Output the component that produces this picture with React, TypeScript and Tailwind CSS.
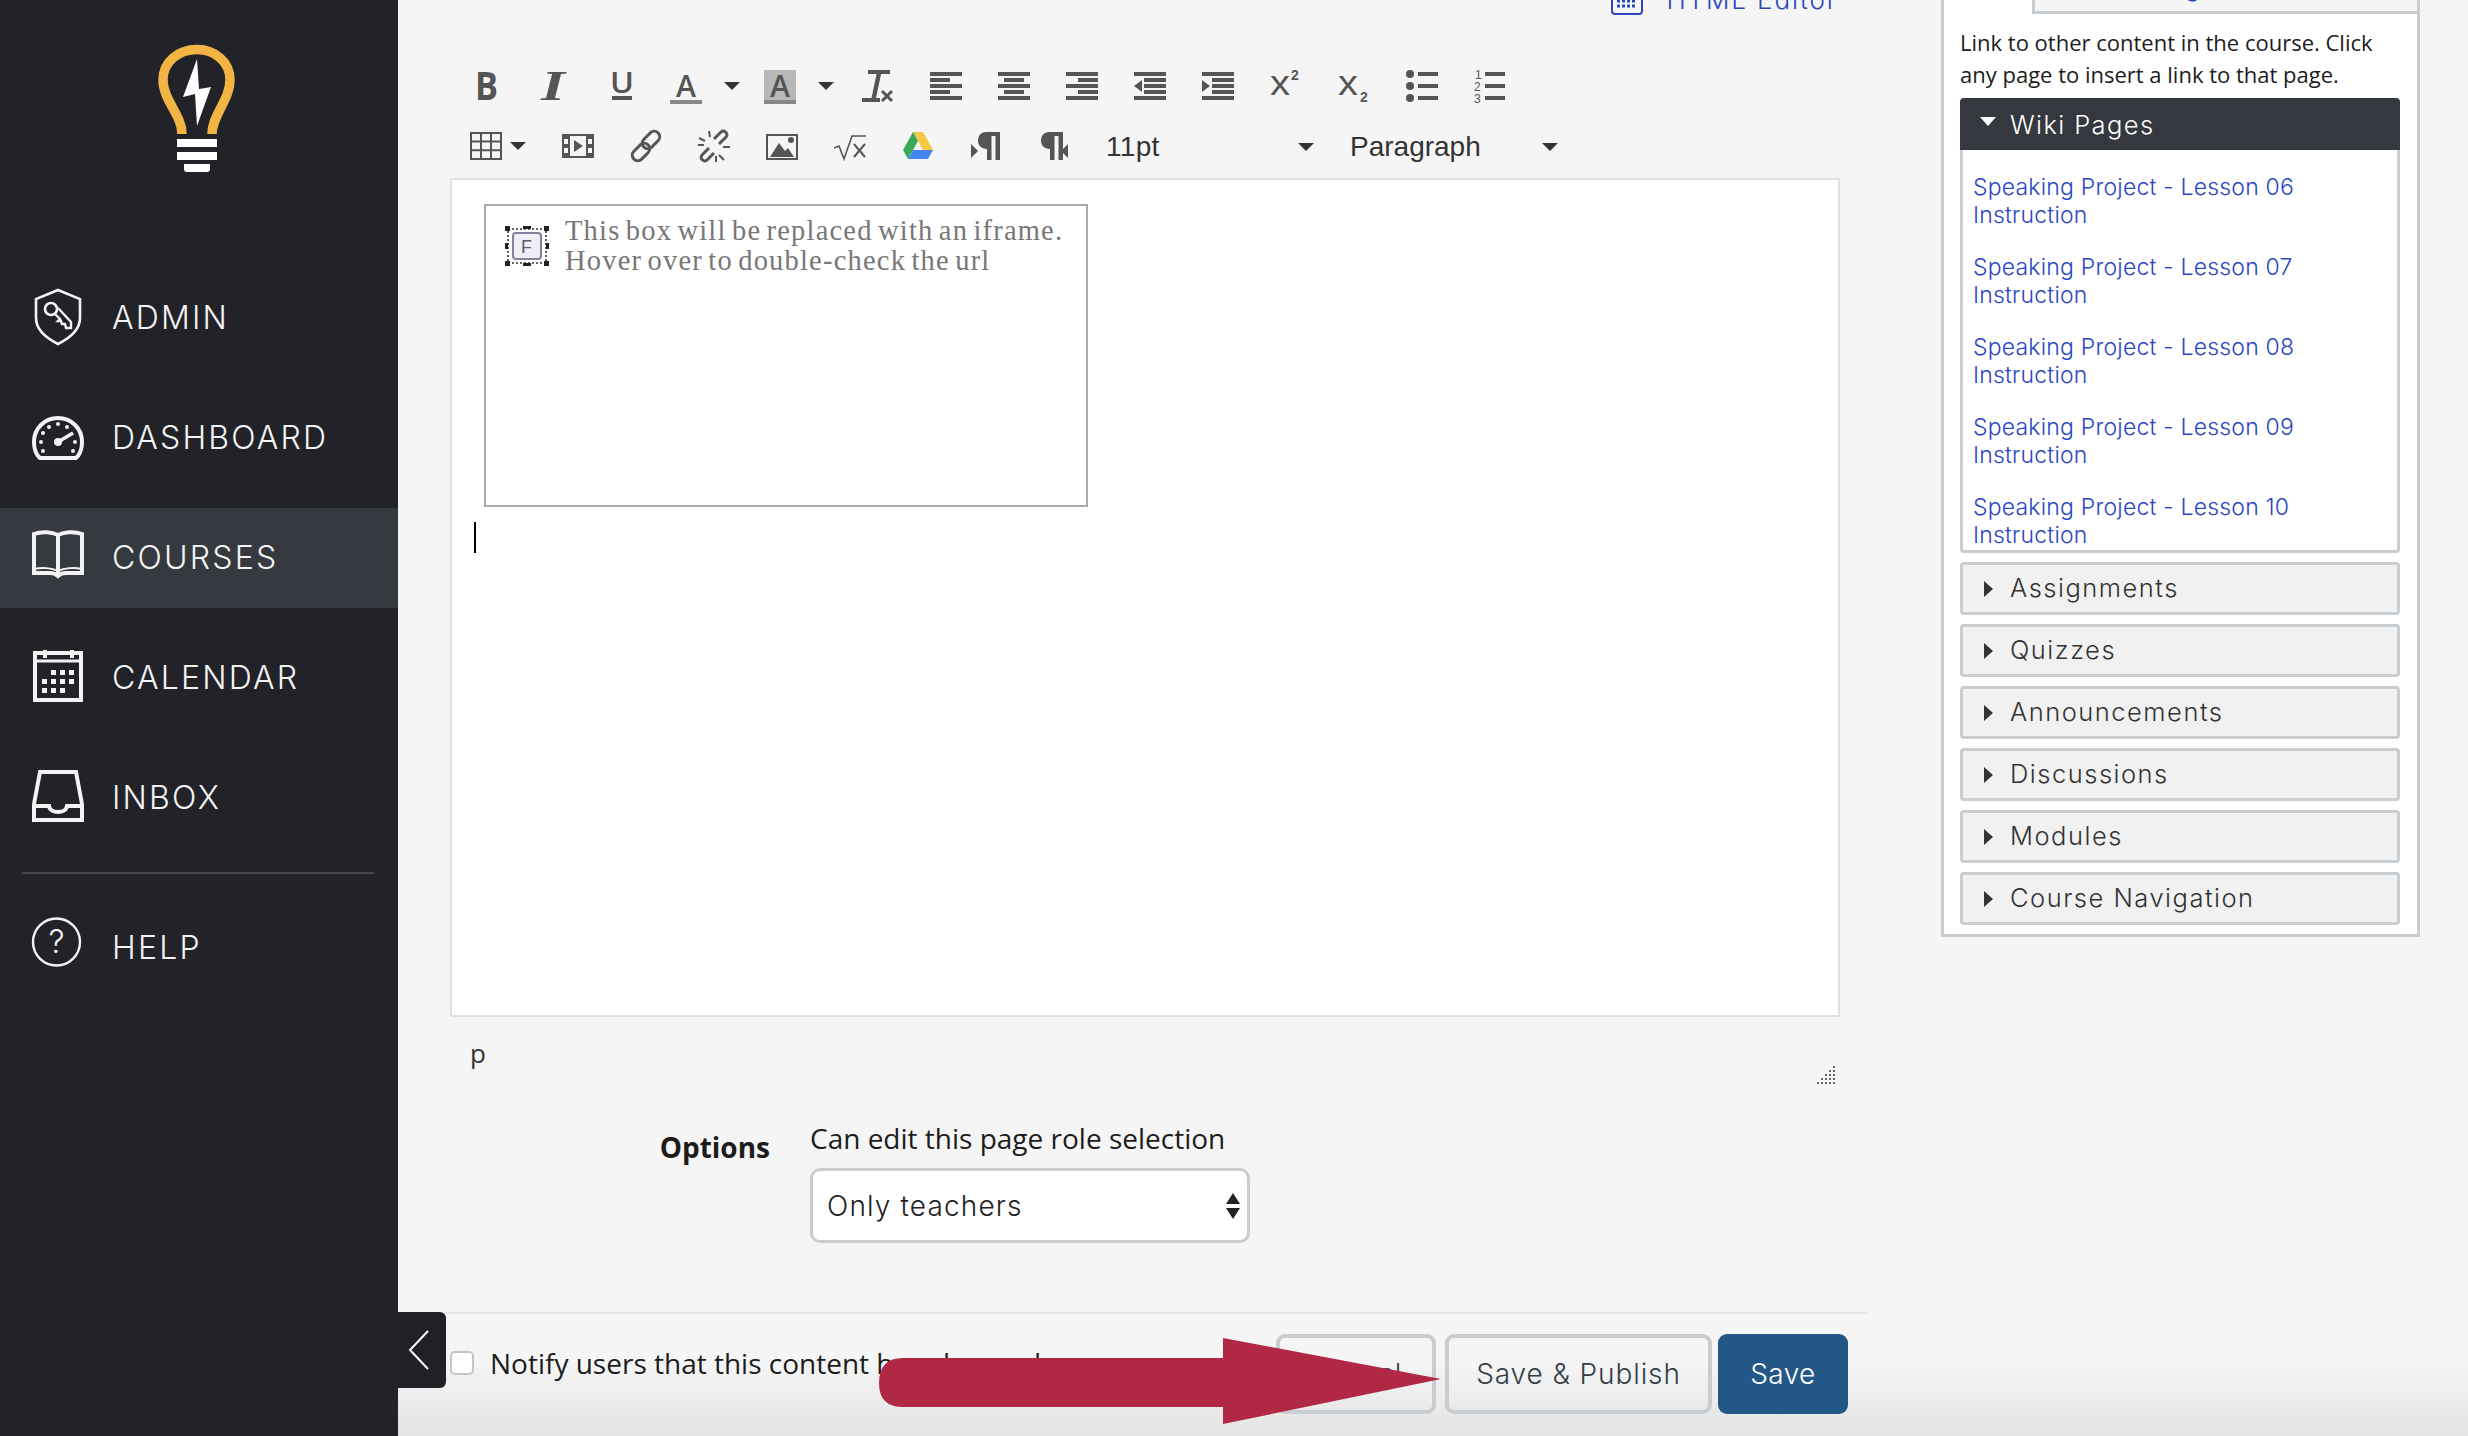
import React from "react";

const G = "#555555";

function Align({ kind }: { kind: "l" | "c" | "r" }) {
  const sx = kind === "l" ? 0 : kind === "c" ? 6 : 12;
  return (
    <svg width="32" height="36" viewBox="0 0 32 36" className="shrink-0">
      <rect x="0" y="4" width="32" height="4" fill={G} />
      <rect x={sx} y="10" width="20" height="4" fill={G} />
      <rect x="0" y="16" width="32" height="4" fill={G} />
      <rect x={sx} y="22" width="20" height="4" fill={G} />
      <rect x="0" y="28" width="32" height="4" fill={G} />
    </svg>
  );
}

function Indent({ dir }: { dir: "left" | "right" }) {
  return (
    <svg width="32" height="36" viewBox="0 0 32 36" className="shrink-0">
      <rect x="0" y="4" width="32" height="4" fill={G} />
      <rect x="10" y="10" width="22" height="4" fill={G} />
      <rect x="10" y="16" width="22" height="4" fill={G} />
      <rect x="10" y="22" width="22" height="4" fill={G} />
      <rect x="0" y="28" width="32" height="4" fill={G} />
      {dir === "left" ? <path d="M0 18 L8 12 L8 24 Z" fill={G} /> : <path d="M8 18 L0 12 L0 24 Z" fill={G} />}
    </svg>
  );
}

function Caret({ className = "" }: { className?: string }) {
  return (
    <svg width="16" height="36" viewBox="0 0 16 36" className={"shrink-0 " + className}>
      <path d="M0 14 L16 14 L8 22 Z" fill="#333" />
    </svg>
  );
}

function TextIcon({ children, w = 32 }: { children: React.ReactNode; w?: number }) {
  return (
    <svg width={w} height="36" viewBox={`0 0 ${w} 36`} className="shrink-0 overflow-visible">
      {children}
    </svg>
  );
}

const OS = "'Open Sans', sans-serif";
const LS = "'Liberation Sans', sans-serif";

function Pilcrow({ dir }: { dir: "l" | "r" }) {
  const ox = dir === "l" ? 5 : 0;
  return (
    <TextIcon>
      <g transform={`translate(${ox} 0)`}>
        <path d="M11 3 L25 3 L25 31 L20.5 31 L20.5 7 L16.5 7 L16.5 31 L12 31 L12 20 C6 20 3 16 3 11.5 C3 7 6 3 11 3 Z" fill={G} />
      </g>
      {dir === "l" ? <path d="M1 15 L8 22 L1 29 Z" fill={G} /> : <path d="M30 15 L23 22 L30 29 Z" fill={G} />}
    </TextIcon>
  );
}

function ToolbarRow1() {
  return (
    <div className="mt-[52px] flex h-[36px] items-start pl-[20px]">
      <TextIcon>
        <text x="5" y="32" fontFamily={OS} fontWeight="700" fontSize="39" fill={G} textLength="23" lengthAdjust="spacingAndGlyphs">B</text>
      </TextIcon>
      <div className="ml-[36px]">
        <TextIcon>
          <text x="3" y="32" fontFamily="'Liberation Serif', serif" fontStyle="italic" fontWeight="700" fontSize="42" fill={G} textLength="24" lengthAdjust="spacingAndGlyphs">I</text>
        </TextIcon>
      </div>
      <div className="ml-[36px]">
        <TextIcon>
          <text x="4" y="25" fontFamily={OS} fontWeight="600" fontSize="29" fill={G} textLength="24" lengthAdjust="spacingAndGlyphs">U</text>
          <rect x="6" y="28" width="20" height="4" fill={G} />
        </TextIcon>
      </div>
      <div className="ml-[32px]">
        <TextIcon>
          <text x="6" y="29" fontFamily={OS} fontWeight="600" fontSize="31" fill={G} textLength="20" lengthAdjust="spacingAndGlyphs">A</text>
          <rect x="0" y="32" width="32" height="4" fill="#888" />
        </TextIcon>
      </div>
      <Caret className="ml-[22px]" />
      <div className="ml-[24px]">
        <TextIcon>
          <rect x="0" y="2" width="32" height="34" fill="#b8b8b8" />
          <rect x="0" y="32" width="32" height="4" fill="#888" />
          <text x="6" y="29" fontFamily={OS} fontWeight="600" fontSize="31" fill={G} textLength="20" lengthAdjust="spacingAndGlyphs">A</text>
        </TextIcon>
      </div>
      <Caret className="ml-[22px]" />
      <div className="ml-[28px]">
        <TextIcon>
          <rect x="6" y="2" width="22" height="4" fill={G} />
          <path d="M15 4 L19.5 4 L14 30 L9.5 30 Z" fill={G} />
          <rect x="0" y="30" width="18" height="4" fill={G} />
          <path d="M20 23 L30 33 M30 23 L20 33" stroke={G} strokeWidth="3" />
        </TextIcon>
      </div>
      <div className="ml-[36px]"><Align kind="l" /></div>
      <div className="ml-[36px]"><Align kind="c" /></div>
      <div className="ml-[36px]"><Align kind="r" /></div>
      <div className="ml-[36px]"><Indent dir="left" /></div>
      <div className="ml-[36px]"><Indent dir="right" /></div>
      <div className="ml-[36px]">
        <TextIcon>
          <text x="0" y="27" fontFamily={LS} fontSize="35" fill={G} textLength="20" lengthAdjust="spacingAndGlyphs">x</text>
          <text x="21" y="12" fontFamily={LS} fontSize="14" fontWeight="700" fill={G}>2</text>
        </TextIcon>
      </div>
      <div className="ml-[36px]">
        <TextIcon>
          <text x="0" y="27" fontFamily={LS} fontSize="35" fill={G} textLength="20" lengthAdjust="spacingAndGlyphs">x</text>
          <text x="22" y="34" fontFamily={LS} fontSize="14" fontWeight="700" fill={G}>2</text>
        </TextIcon>
      </div>
      <div className="ml-[36px]">
        <TextIcon>
          <circle cx="4" cy="6" r="4" fill={G} />
          <circle cx="4" cy="18" r="4" fill={G} />
          <circle cx="4" cy="30" r="4" fill={G} />
          <rect x="12" y="4" width="20" height="4" fill={G} />
          <rect x="12" y="16" width="20" height="4" fill={G} />
          <rect x="12" y="28" width="20" height="4" fill={G} />
        </TextIcon>
      </div>
      <div className="ml-[36px]">
        <TextIcon>
          <text x="1" y="11" fontFamily={LS} fontSize="12" fill={G}>1</text>
          <text x="0" y="23" fontFamily={LS} fontSize="12" fill={G}>2</text>
          <text x="0" y="35" fontFamily={LS} fontSize="12" fill={G}>3</text>
          <rect x="11" y="4" width="20" height="4" fill={G} />
          <rect x="11" y="16" width="20" height="4" fill={G} />
          <rect x="11" y="28" width="20" height="4" fill={G} />
        </TextIcon>
      </div>
    </div>
  );
}

function ToolbarRow2() {
  return (
    <div className="mt-[25px] flex h-[36px] items-start pl-[20px]">
      <TextIcon>
        <rect x="1" y="4" width="30" height="26" fill="none" stroke={G} strokeWidth="2" />
        <path d="M11 4 V30 M21 4 V30 M1 12.6 H31 M1 21.3 H31" stroke={G} strokeWidth="2" />
      </TextIcon>
      <Caret className="ml-[8px] mt-[-1px]" />
      <div className="ml-[36px]">
        <TextIcon>
          <rect x="1" y="6" width="30" height="22" fill="none" stroke={G} strokeWidth="2" />
          <path d="M7 6 V28 M25 6 V28" stroke={G} strokeWidth="2" />
          <path d="M1 6 H7 V10 H1 Z M1 15 H7 V19 H1 Z M1 24 H7 V28 H1 Z M25 6 H31 V10 H25 Z M25 15 H31 V19 H25 Z M25 24 H31 V28 H25 Z" fill={G} />
          <path d="M12 11 L21 17 L12 23 Z" fill={G} />
        </TextIcon>
      </div>
      <div className="ml-[36px]">
        <TextIcon>
          <rect x="1" y="17.5" width="20" height="11" rx="5.5" transform="rotate(-45 11 23)" fill="none" stroke={G} strokeWidth="3" />
          <rect x="11" y="5.5" width="20" height="11" rx="5.5" transform="rotate(-45 21 11)" fill="none" stroke={G} strokeWidth="3" />
        </TextIcon>
      </div>
      <div className="ml-[36px]">
        <TextIcon>
          <path d="M11 19 L4 26 C1 29 6 34 9 31 L16 24" fill="none" stroke={G} strokeWidth="3" />
          <path d="M21 15 L28 8 C31 5 26 0 23 3 L16 10" fill="none" stroke={G} strokeWidth="3" />
          <path d="M1 9 L7 12 M11 2 L12 8 M21 26 L26 31 M18 27 L18 33 M25 18 L32 18 M0 16 L6 16" stroke={G} strokeWidth="2" />
        </TextIcon>
      </div>
      <div className="ml-[36px]">
        <TextIcon>
          <rect x="1" y="6" width="30" height="24" fill="none" stroke={G} strokeWidth="2" />
          <path d="M4 28 L13 14 L19 22 L22 19 L28 28 Z" fill={G} />
          <circle cx="25" cy="11" r="3" fill={G} />
        </TextIcon>
      </div>
      <div className="ml-[36px]">
        <TextIcon>
          <path d="M0 19 L5 17 L10 30 L18 7 H32" fill="none" stroke={G} strokeWidth="1.6" />
          <path d="M20 15 L31 28 M31 15 L20 28" stroke={G} strokeWidth="2" />
        </TextIcon>
      </div>
      <div className="ml-[36px]">
        <TextIcon>
          <path d="M11 3 L21 3 L31 21 L21 21 Z" fill="#f6c945" />
          <path d="M11 3 L16 12 L6 30 L1 21 Z" fill="#3aa757" />
          <path d="M11 21 L31 21 L26 30 L6 30 Z" fill="#4385f2" />
        </TextIcon>
      </div>
      <div className="ml-[36px]"><Pilcrow dir="l" /></div>
      <div className="ml-[36px]"><Pilcrow dir="r" /></div>
      <div className="ml-[36px] flex h-[36px] w-[192px] items-center font-['Liberation_Sans'] text-[28px] tracking-[0.3px] text-[#333]">11pt</div>
      <Caret />
      <div className="ml-[36px] flex h-[36px] w-[192px] items-center font-['Liberation_Sans'] text-[28px] text-[#333]">Paragraph</div>
      <Caret />
    </div>
  );
}

function Placeholder() {
  return (
    <div className="ml-[32px] mt-[24px] flex h-[303px] w-[604px] border-2 border-[#aaaaaa] pl-[19px] pt-[10px]">
      <svg width="44" height="40" viewBox="0 0 44 40" className="mt-[10px] shrink-0">
        <rect x="3" y="3" width="38" height="34" fill="none" stroke="#333" strokeWidth="1.6" strokeDasharray="2 2" />
        <rect x="8" y="7" width="28" height="26" rx="3" fill="#eeeef4" stroke="#8580a0" strokeWidth="2" />
        <text x="16" y="27" fontFamily={LS} fontSize="18" fill="#5d5878">F</text>
        <path d="M0 0 H5 V5 H0 Z M39 0 H44 V5 H39 Z M0 35 H5 V40 H0 Z M39 35 H44 V40 H39 Z M18 0 H26 V3 H18 Z M18 37 H26 V40 H18 Z M0 17 H3 V23 H0 Z M41 17 H44 V23 H41 Z" fill="#222" />
      </svg>
      <div className="ml-[16px] font-['Liberation_Serif'] text-[28.5px] leading-[30px] tracking-[1.2px] text-[#777777] [word-spacing:-3px]">
        <div>This box will be replaced with an iframe.</div>
        <div>Hover over to double-check the url</div>
      </div>
    </div>
  );
}

function SideIcon({ top, children }: { top: number; children: React.ReactNode }) {
  return (
    <svg width="52" height="60" viewBox={`32 ${top} 52 60`} className="shrink-0 overflow-visible">
      {children}
    </svg>
  );
}

const W = "#f3f3f3";

function NavItem({ label, top, active, children }: { label: string; top: number; active?: boolean; children: React.ReactNode }) {
  return (
    <div className={"flex h-[100px] items-center pl-[32px] " + (active ? "bg-[#363940]" : "")}>
      <SideIcon top={top}>{children}</SideIcon>
      <span className="ml-[28px] font-['Inter'] text-[32px] font-light tracking-[2.2px] text-[#f3f3f3]">{label}</span>
    </div>
  );
}

function Sidebar() {
  return (
    <div className="flex h-full w-[398px] shrink-0 flex-col bg-[#212329]">
      <div className="flex h-[268px] flex-col items-center pr-[4px] pt-[40px]">
        <svg width="92" height="136" viewBox="151 40 92 136">
          <path d="M182 134 C182 115 163 100 163 80 C163 62 178 49.5 197 49.5 C215 49.5 230 62 230 80 C230 100 212 115 212 134" fill="none" stroke="#f2b544" strokeWidth="9.5" />
          <path d="M197 59 L183 97 L195 94 L197 126 L211 87 L199 89 Z" fill="#fff" />
          <rect x="177" y="139" width="40" height="8" fill="#fff" />
          <rect x="177" y="152" width="40" height="8" fill="#fff" />
          <path d="M184 164 H210 V169 Q210 172 207 172 H187 Q184 172 184 169 Z" fill="#fff" />
        </svg>
      </div>
      <div className="flex flex-col gap-[20px]">
        <NavItem label="ADMIN" top={288}>
          <path d="M58 290 L80 299 V318 C80 330 68 339 58 344 C48 339 36 330 36 318 V299 Z" fill="none" stroke={W} strokeWidth="2.6" />
          <circle cx="51" cy="309" r="6" fill="none" stroke={W} strokeWidth="2.6" />
          <path d="M55 314 L60 319 L58 321 L61 321 L62 324 L65 324 L66 328 H71 V322 L58 308" fill="none" stroke={W} strokeWidth="2.4" />
        </NavItem>
        <NavItem label="DASHBOARD" top={408}>
          <path d="M40 458 L38 456 C35 452 34 447 34 442 C34 428 45 418 58 418 C71 418 82 428 82 442 C82 447 81 452 78 456 L76 458 Z" fill="none" stroke={W} strokeWidth="4" />
          <circle cx="58" cy="442" r="4" fill={W} />
          <path d="M58 442 L73 433" stroke={W} strokeWidth="3.4" />
          {[[41, 442], [43, 433], [49, 427], [58, 424], [67, 427], [75, 442], [43, 451], [73, 451]].map(([x, y], i) => (
            <circle key={i} cx={x} cy={y} r="2" fill={W} />
          ))}
        </NavItem>
        <NavItem label="COURSES" active top={528}>
          <path d="M34 534 C42 531 52 532 58 535 C64 532 74 531 82 534 V573 H66 C63 573 60 574 58 576 C56 574 53 573 50 573 H34 Z" fill="none" stroke={W} strokeWidth="4" />
          <path d="M58 535 V576" stroke={W} strokeWidth="4" />
          <path d="M34 569 C42 567 52 568 58 571 C64 568 74 567 82 569" fill="none" stroke={W} strokeWidth="2" />
        </NavItem>
        <NavItem label="CALENDAR" top={648}>
          <rect x="35" y="653" width="46" height="47" fill="none" stroke={W} strokeWidth="4" />
          <path d="M34 661 H82" stroke={W} strokeWidth="3" />
          <rect x="43" y="650" width="4" height="8" fill={W} />
          <rect x="70" y="650" width="4" height="8" fill={W} />
          {[[51, 670], [60, 670], [69, 670], [42, 679], [51, 679], [60, 679], [69, 679], [42, 688], [51, 688], [60, 688]].map(([x, y], i) => (
            <rect key={i} x={x} y={y} width="5" height="5" fill={W} />
          ))}
        </NavItem>
        <NavItem label="INBOX" top={768}>
          <path d="M34 804 L40 772 H76 L82 804" fill="none" stroke={W} strokeWidth="4" />
          <path d="M34 806 H49 C50 814 66 814 67 806 H82 V820 H34 Z" fill="none" stroke={W} strokeWidth="4" />
        </NavItem>
      </div>
      <div className="ml-[22px] mt-[24px] h-[2px] w-[352px] bg-[#45474c]" />
      <div className="mt-[24px]">
        <NavItem label="HELP" top={919}>
          <circle cx="56.5" cy="943" r="23.5" fill="none" stroke={W} strokeWidth="2.4" />
          <text x="56.5" y="954" textAnchor="middle" fontFamily="Inter, sans-serif" fontWeight="300" fontSize="32" fill={W}>?</text>
        </NavItem>
      </div>
    </div>
  );
}

function Accordion({ label }: { label: string }) {
  return (
    <div className="mt-[9px] flex h-[53px] w-[440px] items-center rounded-[4px] border-[3px] border-[#c7cdd1] bg-[#f1f1f1] pl-[21px]">
      <svg width="9" height="16" viewBox="0 0 9 16" className="shrink-0">
        <path d="M0 0 L9 8 L0 16 Z" fill="#333" />
      </svg>
      <span className="ml-[17px] font-['Inter'] text-[25.5px] font-light tracking-[1.5px] text-[#333333]">{label}</span>
    </div>
  );
}

function WikiLink({ n }: { n: string }) {
  return (
    <div className="mb-[24px] font-['Inter'] text-[23px] font-light leading-[28px] tracking-[0.2px] text-[#2a47bf] last:mb-0">
      <div>Speaking Project - Lesson {n}</div>
      <div>Instruction</div>
    </div>
  );
}

function RightPanel() {
  return (
    <div className="ml-[101px] flex h-[937px] w-[479px] shrink-0 flex-col border-x-[3px] border-b-[3px] border-[#c7cdd1] bg-white">
      <div className="flex h-[14px] shrink-0">
        <div className="w-[88px]" />
        <div className="flex-1 overflow-hidden border-b-[3px] border-l-[3px] border-[#c7cdd1] bg-[#f5f5f5] pl-[106px]">
          <div className="mt-[-28px] font-['Inter'] text-[26px] font-light leading-[30px] text-[#2a47bf]">Images</div>
        </div>
      </div>
      <div className="px-[16px] pt-[12px]">
        <p className="mb-[8px] font-['Open_Sans'] text-[22px] leading-[32px] text-[#1c1c1c]">
          Link to other content in the course. Click
          <br />
          any page to insert a link to that page.
        </p>
        <div className="flex h-[52px] w-[440px] items-center rounded-t-[4px] bg-[#363840] pl-[20px]">
          <svg width="16" height="9" viewBox="0 0 16 9" className="mt-[-5px] shrink-0">
            <path d="M0 0 H16 L8 9 Z" fill="#fff" />
          </svg>
          <span className="ml-[14px] mt-[3px] font-['Inter'] text-[25.5px] font-light tracking-[1.4px] text-white">Wiki Pages</span>
        </div>
        <div className="h-[403px] w-[440px] rounded-b-[4px] border-x-[3px] border-b-[3px] border-[#c7cdd1] pl-[10px] pt-[23px]">
          {["06", "07", "08", "09", "10"].map((n) => (
            <WikiLink key={n} n={n} />
          ))}
        </div>
        {["Assignments", "Quizzes", "Announcements", "Discussions", "Modules", "Course Navigation"].map((l) => (
          <Accordion key={l} label={l} />
        ))}
      </div>
    </div>
  );
}

function EditorColumn() {
  return (
    <div className="ml-[52px] flex w-[1390px] shrink-0 flex-col">
      <div className="flex h-[16px] items-end justify-end pr-[2px]">
        <svg width="32" height="32" viewBox="0 0 32 32" className="shrink-0">
          <rect x="1" y="1" width="30" height="29" rx="3" fill="none" stroke="#2a47bf" strokeWidth="2" />
          <path d="M6 17 H26 M6 22 H26" stroke="#2a47bf" strokeWidth="3" strokeDasharray="3 2" />
        </svg>
        <span className="ml-[23px] font-['Inter'] text-[26px] font-light leading-[32px] tracking-[1.9px] text-[#2a47bf]">HTML Editor</span>
      </div>
      <ToolbarRow1 />
      <ToolbarRow2 />
      <div className="mt-[13px] flex h-[839px] flex-col border-2 border-[#e0e0e0] bg-white">
        <Placeholder />
        <div className="ml-[22px] mt-[15px] h-[31px] w-[2px] bg-black" />
      </div>
      <div className="flex h-[73px] justify-between">
        <span className="ml-[20px] mt-[18px] font-['Open_Sans'] text-[26px] leading-[36px] text-[#333]">p</span>
        <svg width="20" height="20" viewBox="0 0 20 20" className="mr-[3px] mt-[49px]">
          {[[16, 0], [12, 4], [16, 4], [8, 8], [12, 8], [16, 8], [4, 12], [8, 12], [12, 12], [16, 12], [0, 16], [4, 16], [8, 16], [12, 16], [16, 16]].map(([x, y], i) => (
            <rect key={i} x={x} y={y} width="2" height="2" fill="#666" />
          ))}
        </svg>
      </div>
      <div className="flex items-start">
        <div className="mt-[37px] w-[320px] text-right font-['Open_Sans'] text-[28px] font-bold leading-[40px] text-[#1c1c1c]">Options</div>
        <div className="ml-[40px] mt-[28px] flex flex-col">
          <div className="font-['Open_Sans'] text-[28px] leading-[40px] text-[#1c1c1c]">Can edit this page role selection</div>
          <div className="mt-[10px] flex h-[75px] w-[440px] items-center justify-between rounded-[10px] border-[3px] border-[#cccccc] bg-white pl-[14px] pr-[7px]">
            <span className="font-['Inter'] text-[28px] font-light tracking-[1.15px] text-[#222]">Only teachers</span>
            <svg width="14" height="26" viewBox="0 0 14 26">
              <path d="M7 0 L14 11 H0 Z M0 15 H14 L7 26 Z" fill="#222" />
            </svg>
          </div>
        </div>
      </div>
    </div>
  );
}

function Footer() {
  return (
    <div className="h-[124px] bg-linear-to-b from-[#f5f5f5] from-40% to-[#e3e3e3]">
      <div className="ml-[47px] flex h-full w-[1422px] items-start justify-between border-t-2 border-[#e6e6e6] pl-[5px] pr-[19px]">
        <div className="mt-[31px] flex items-center">
          <div className="h-[24px] w-[24px] rounded-[5px] border-2 border-[#c4c4c4] bg-white" />
          <span className="ml-[16px] whitespace-nowrap font-['Open_Sans'] text-[28px] leading-[36px] text-[#1c1c1c]">Notify users that this content has changed</span>
        </div>
        <div className="mt-[20px] flex">
          <div className="flex h-[80px] w-[160px] items-center justify-center rounded-[9px] border-4 border-[#c7cdd1] font-['Inter'] text-[28px] font-light text-[#333f48]">Cancel</div>
          <div className="ml-[9px] flex h-[80px] w-[267px] items-center justify-center rounded-[9px] border-4 border-[#c7cdd1] font-['Inter'] text-[28px] font-light tracking-[0.9px] text-[#333f48]">Save &amp; Publish</div>
          <div className="ml-[6px] flex h-[80px] w-[130px] items-center justify-center rounded-[9px] bg-[#235785] font-['Inter'] text-[28px] font-light tracking-[0.4px] text-white">Save</div>
        </div>
      </div>
    </div>
  );
}

export default function App() {
  return (
    <div className="relative flex h-[1436px] w-[2468px] overflow-hidden bg-[#f5f5f5]">
      <Sidebar />
      <div className="flex min-w-0 flex-1 flex-col">
        <div className="flex h-[1312px] shrink-0">
          <EditorColumn />
          <RightPanel />
        </div>
        <Footer />
      </div>
      <div className="absolute left-[398px] top-[1312px] flex h-[76px] w-[48px] items-center justify-center rounded-r-[6px] bg-[#1f2126] pr-[6px]">
        <svg width="24" height="40" viewBox="0 0 24 40">
          <path d="M21 1 L3 20 L21 39" fill="none" stroke="#fff" strokeWidth="2" />
        </svg>
      </div>
      <svg width="562" height="86" viewBox="0 0 562 86" className="absolute left-[879px] top-[1338px]">
        <path d="M24 20 L344 20 L344 0 L562 41 L344 86 L344 69 L24 69 Q0 69 0 45 Q0 20 24 20 Z" fill="#b02843" />
      </svg>
    </div>
  );
}
